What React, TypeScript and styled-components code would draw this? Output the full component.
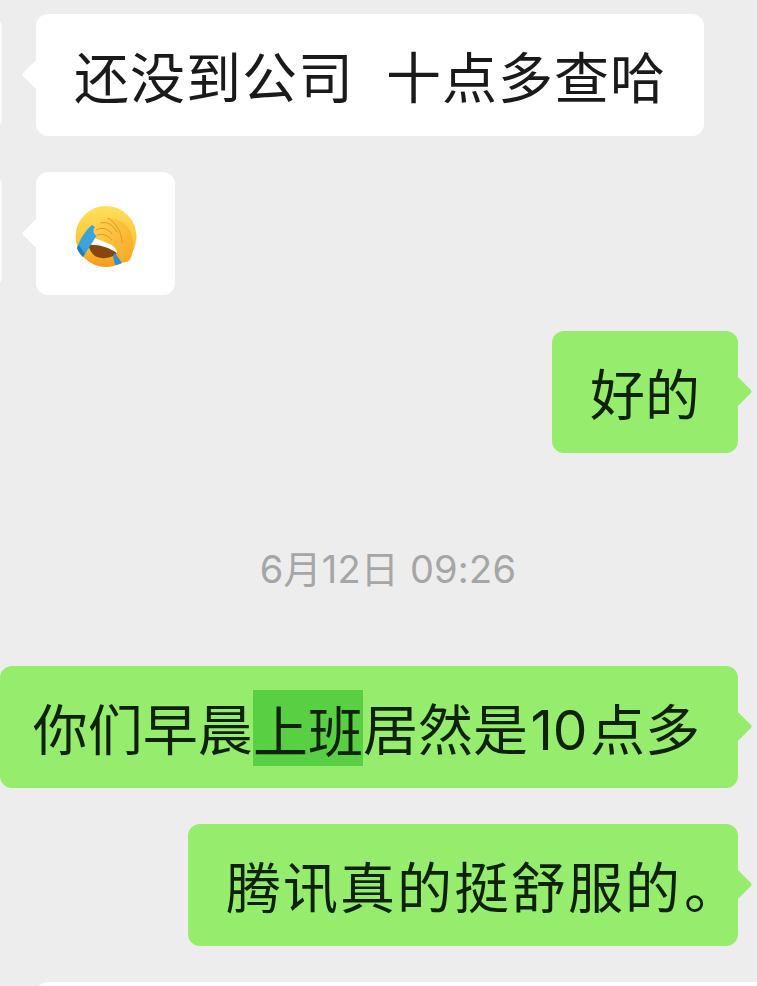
import React from 'react';
import styled, { createGlobalStyle } from "styled-components";

const GlobalStyle = createGlobalStyle`
    html, body {
        margin: 0;
        padding: 0;
        background: #ededed;
    }
`;

const Page = styled.div`
    width: 757px;
    height: 986px;
    overflow: hidden;
    box-sizing: border-box;
    padding: 14px 19px 0 0;
    background: #ededed;
    display: flex;
    flex-direction: column;
    gap: 36px;
    font-family: Inter, "Noto Sans CJK SC", sans-serif;
    color: #171717;
`;

const Row = styled.div<{ $mine?: boolean }>`
    display: flex;
    flex-shrink: 0;
    justify-content: ${p => (p.$mine ? "flex-end" : "flex-start")};
    align-items: flex-start;
`;

// only the last couple of pixels of the avatar are inside the crop
const Avatar = styled.div`
    flex-shrink: 0;
    width: 110px;
    height: 110px;
    margin: 4px 34px 0 -108px;
    border-radius: 8px;
    background: #fafafa;
`;

const Bubble = styled.div<{ $mine?: boolean; $tracking?: number; $left?: number }>`
    position: relative;
    flex-shrink: 0;
    box-sizing: border-box;
    height: 122px;
    padding: 5px 38px 0 ${p => p.$left ?? 38}px;
    border-radius: 12px;
    display: flex;
    align-items: center;
    font-size: 55px;
    line-height: 76px;
    white-space: pre;
    word-spacing: -0.5px;
    letter-spacing: ${p => p.$tracking ?? 0}px;
    background: ${p => (p.$mine ? "#96ec6c" : "#ffffff")};
    color: ${p => (p.$mine ? "#0f2208" : "#1a1a1a")};

    &::before {
        content: "";
        position: absolute;
        top: 50%;
        ${p => (p.$mine ? "right: -10px;" : "left: -10px;")}
        width: 21px;
        height: 21px;
        margin-top: -11px;
        border-radius: 2px;
        background: inherit;
        transform: rotate(45deg);
    }
`;

const EmojiBubble = styled(Bubble)`
    width: 139px;
    height: 123px;
    padding: 6px 0 0 39px;
`;

// next message, cut off by the bottom of the screen
const CutOffBubble = styled(Bubble)`
    width: 740px;
`;

// painted from above the glyph box so the text can sit lower than the selection
const Highlight = styled.span`
    padding-top: 4px;
    background: linear-gradient(#59d043, #59d043) top / 100% 76px no-repeat;
`;

const Digits = styled.span`
    margin: 0 2.5px;
`;

// the full stop keeps only a narrow advance, its ink hangs into the padding
const FullStop = styled.span`
    margin: 0 -41px 0 2px;
`;

const Stamp = styled.div`
    flex-shrink: 0;
    margin: 50px 0 30px 38px;
    text-align: center;
    font-size: 38px;
    line-height: 61px;
    letter-spacing: 0.2px;
    color: #a6a6a6;
`;

const FacepalmEmoji = () => (
    <svg width="62" height="62" viewBox="0 0 62 62">
        <defs>
            <linearGradient id="face" x1="0" y1="0" x2="0" y2="1">
                <stop offset="0%" stopColor="#ffe05c" />
                <stop offset="60%" stopColor="#fdc435" />
                <stop offset="100%" stopColor="#f39a1e" />
            </linearGradient>
            <linearGradient id="hand" x1="0" y1="0" x2="1" y2="1">
                <stop offset="0%" stopColor="#ffd451" />
                <stop offset="100%" stopColor="#f7a723" />
            </linearGradient>
        </defs>
        <circle cx="31" cy="30.5" r="30.5" fill="url(#face)" />
        <path d="M13 38 C22 36 33 40 42 47 C38 52 27 54 20 50 C16 47 14 42 13 38 Z" fill="#87460f" />
        <path d="M15 30 L42 41 L42 47 C33 41 23 38 12 39 Z" fill="#ffffff" />
        <path d="M17 19 L20 21 L24 26 L8 51 C5 48 3 45 2 42 C5 33 10 25 17 19 Z" fill="#3aa3dc" />
        <path d="M8 51 C5 48 3 45 2 42 L4 39 L10 48 Z" fill="#1f7fb8" />
        <path d="M40 47 L47 57 C45 58 42 59 40 59 L38 50 Z" fill="#2c93cf" />
        <path d="M20 21 C23 16 28 12 33 12 C40 12 48 15 53 21 C57 27 59 36 58 44 C57 50 55 55 52 56 C48 57 46 56 45 53 C44 49 42 45 40 42 C36 38 33 35 30 34 C26 32 23 31 20 29 C18 26 18 23 20 21 Z" fill="url(#hand)" />
        <path d="M21 24 C26 21 33 22 37 28 M22 29 C27 27 33 29 37 34 M26 17 C32 15 38 19 42 26 M33 12 C41 17 47 26 47 37" fill="none" stroke="#e0982c" strokeWidth="1" strokeLinecap="round" />
    </svg>
);

const App: React.FC = () => {
    return (
        <Page>
            <GlobalStyle />
            <Row>
                <Avatar />
                <Bubble $tracking={1}>{"还没到公司  十点多查哈"}</Bubble>
            </Row>
            <Row>
                <Avatar />
                <EmojiBubble><FacepalmEmoji /></EmojiBubble>
            </Row>
            <Row $mine>
                <Bubble $mine>好的</Bubble>
            </Row>
            <Stamp>6月12日 09:26</Stamp>
            <Row $mine>
                <Bubble $mine $left={33}>你们早晨<Highlight>上班</Highlight>居然是<Digits>10</Digits>点多</Bubble>
            </Row>
            <Row $mine>
                <Bubble $mine $tracking={2}>腾讯真的挺舒服的<FullStop>。</FullStop></Bubble>
            </Row>
            <Row>
                <Avatar />
                <CutOffBubble />
            </Row>
        </Page>
    );
};

export default App;
